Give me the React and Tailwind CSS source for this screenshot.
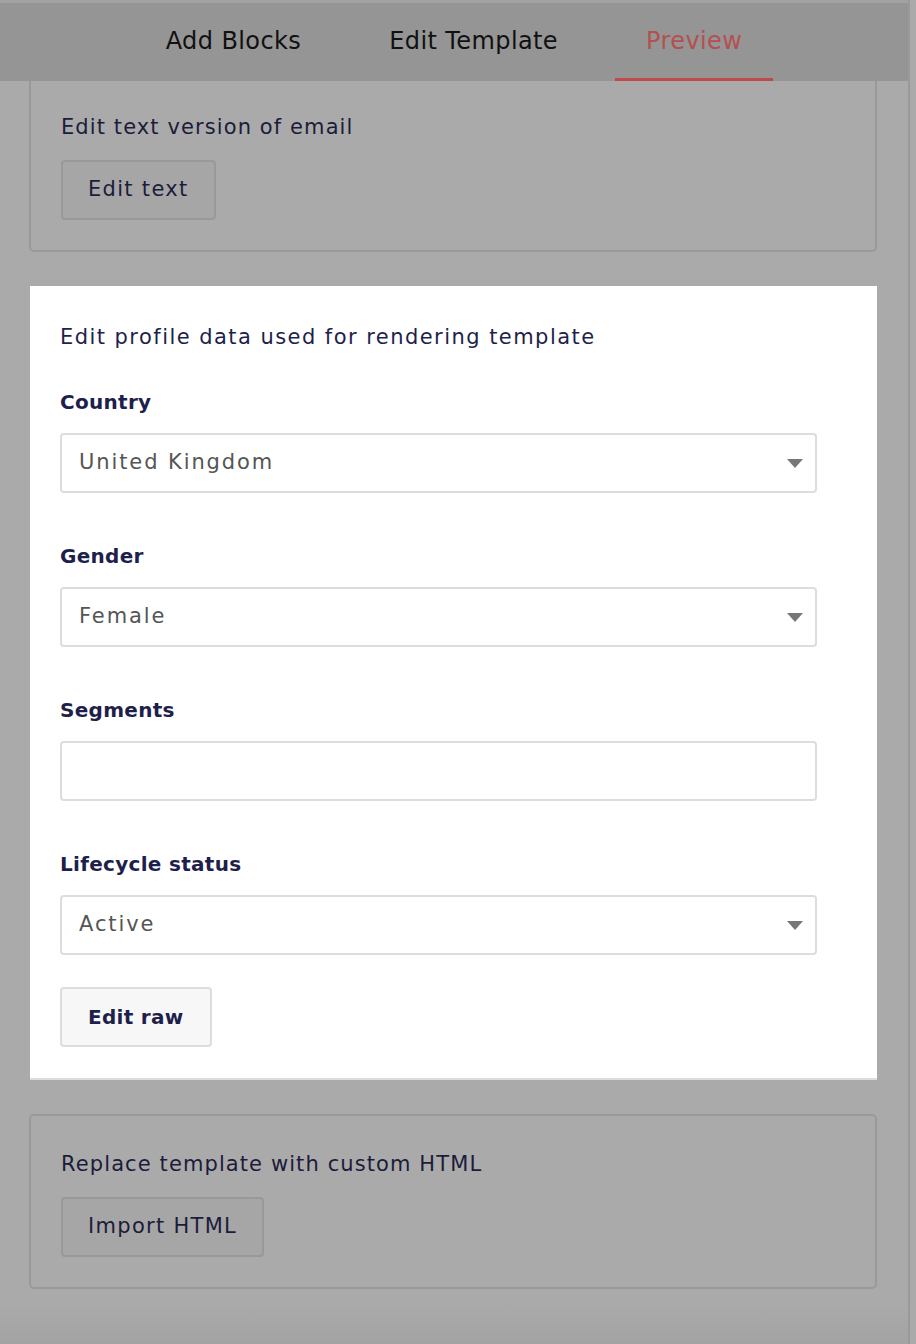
import React from 'react';

const font = { fontFamily: '"DejaVu Sans", "Open Sans", sans-serif' };

const tabs = [
    { label: 'Add Blocks', active: false },
    { label: 'Edit Template', active: false },
    { label: 'Preview', active: true },
];

const fields = [
    { label: 'Country', value: 'United Kingdom', select: true },
    { label: 'Gender', value: 'Female', select: true },
    { label: 'Segments', value: '', select: false },
    { label: 'Lifecycle status', value: 'Active', select: true },
];

const Caret = () => (
    <svg width="16" height="9" viewBox="0 0 16 9" className="shrink-0">
        <path d="M0 0 L16 0 L8 9 Z" fill="#777777" />
    </svg>
);

const DimCard = ({ title, button, className }) => (
    <div className={`border-[#999999] rounded-[5px] ${className}`}>
        <div className="text-[21px] leading-[26px] tracking-[1.1px] text-[#1c1c3a]">{title}</div>
        <button className="mt-[20px] h-[60px] px-[25px] rounded-[4px] bg-[#a6a6a6] border-2 border-[#999999] text-[21px] tracking-[1.3px] text-[#1c1c3a]">
            {button}
        </button>
    </div>
);

export default function App() {
    return (
        <div style={font} className="w-[916px] h-[1344px] bg-[#aaaaaa] flex overflow-hidden">
            <div className="w-[910px] h-full flex flex-col border-r-2 border-[#999999] bg-gradient-to-b from-[#aaaaaa] from-[97%] to-[#a3a3a3]">
                {/* tab bar */}
                <div className="h-[81px] shrink-0 bg-[#959595] border-t-[3px] border-[#a2a2a2] flex justify-center gap-[26px]">
                    {tabs.map((tab) => (
                        <div
                            key={tab.label}
                            className={`h-full px-[31px] flex items-center text-[24px] tracking-[0.4px] border-b-[3px] ${
                                tab.active ? 'text-[#b4504f] border-[#bf4a4a]' : 'text-[#111111] border-transparent'
                            }`}
                        >
                            {tab.label}
                        </div>
                    ))}
                </div>

                <div className="pl-[29px] pr-[31px] flex flex-col">
                    <DimCard
                        title="Edit text version of email"
                        button="Edit text"
                        className="border-x-2 border-b-2 rounded-t-none pt-[33px] pb-[30px] px-[30px]"
                    />

                    {/* highlighted card */}
                    <div className="mt-[34px] ml-px bg-white border-b-2 border-[#dddddd] pt-[38px] pb-[31px] pl-[30px] pr-[60px] text-[#1e1f4b]">
                        <div className="text-[21px] leading-[26px] tracking-[1.45px]">Edit profile data used for rendering template</div>
                        <div className="mt-[40px] flex flex-col gap-[51px]">
                            {fields.map((f) => (
                                <div key={f.label}>
                                    <div className="text-[20px] leading-[24px] tracking-[0.3px] font-semibold">{f.label}</div>
                                    <div className="mt-[19px] h-[60px] rounded-[4px] border-2 border-[#dddddd] flex items-center justify-between pl-[17px] pr-[12px]">
                                        <span className="text-[21px] tracking-[1.9px] text-[#555555]">{f.value}</span>
                                        {f.select && <Caret />}
                                    </div>
                                </div>
                            ))}
                        </div>
                        <button className="mt-[32px] h-[60px] px-[26px] rounded-[4px] bg-[#f7f7f7] border-2 border-[#dddddd] text-[20px] tracking-[0.3px] font-semibold">
                            Edit raw
                        </button>
                    </div>

                    <DimCard
                        title="Replace template with custom HTML"
                        button="Import HTML"
                        className="mt-[34px] border-2 pt-[35px] pb-[30px] px-[30px]"
                    />
                </div>
            </div>
        </div>
    );
}
